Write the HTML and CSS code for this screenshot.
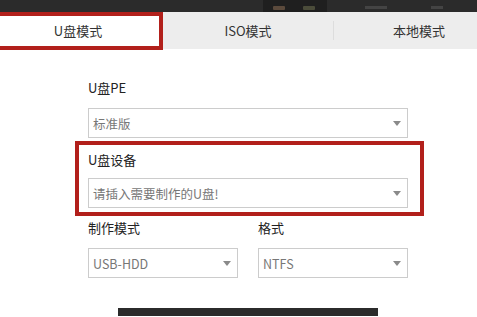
FILE: index.html
```html
<!DOCTYPE html>
<html lang="zh">
<head>
    <meta charset='utf-8'>
    <meta name="viewport" content="width=device-width, initial-scale=1">
    <title>U盘模式</title>
    <link rel="stylesheet" href="styles.css">
</head>
<body>

<div class="topbar">
    <div class="topbar-tools">
        <span class="tool tool-a"></span>
        <span class="tool tool-b"></span>
    </div>
    <span class="topbar-mark mark-a"></span>
    <span class="topbar-mark mark-b"></span>
</div>

<div class="tabs">
    <div class="tab active">U盘模式</div>
    <div class="tab">ISO模式</div>
    <div class="tab last">本地模式</div>
</div>

<div class="form">
    <div class="field">
        <div class="label">U盘PE</div>
        <div class="select"><span>标准版</span><i class="arrow"></i></div>
    </div>

    <div class="field highlight">
        <div class="label">U盘设备</div>
        <div class="select"><span>请插入需要制作的U盘!</span><i class="arrow"></i></div>
    </div>

    <div class="row">
        <div class="field">
            <div class="label">制作模式</div>
            <div class="select"><span>USB-HDD</span><i class="arrow"></i></div>
        </div>
        <div class="field">
            <div class="label">格式</div>
            <div class="select"><span>NTFS</span><i class="arrow"></i></div>
        </div>
    </div>

    <button class="start" aria-label="开始制作"></button>
</div>

</body>
</html>
```

FILE: styles.css
```css
body {
    margin: 0;
    background: #FFFFFF;
    font-family: "Noto Sans CJK SC", "Noto Sans", sans-serif;
    font-size: 13px;
    overflow: hidden;
}

.topbar {
    height: 12px;
    background: #2b2b2b;
    display: flex;
    align-items: flex-end;
}

.topbar-tools {
    margin-left: 263px;
    width: 64px;
    height: 12px;
    background: #1f1f1f;
    display: flex;
    align-items: flex-end;
    gap: 18px;
    padding-left: 10px;
    box-sizing: border-box;
}

.tool {
    width: 12px;
    height: 4px;
    margin-bottom: 2px;
    border-radius: 1px;
}

.tool-a {
    background: #5b4a3c;
}

.tool-b {
    background: #4b4c3a;
}

.topbar-mark {
    height: 3px;
    margin-bottom: 3px;
    background: #444444;
}

.mark-a {
    width: 22px;
    margin-left: 38px;
}

.mark-b {
    width: 12px;
    margin-left: 44px;
}

.tabs {
    display: flex;
    height: 37px;
    background: #ededed;
}

.tab {
    position: relative;
    width: 170px;
    flex: none;
    display: flex;
    align-items: center;
    justify-content: center;
    box-sizing: border-box;
    color: #333333;
}

.tab.active {
    width: 163px;
    padding-right: 7px;
    background: #FFFFFF;
}

.tab.last {
    width: 144px;
    padding-right: 0;
    justify-content: flex-start;
    padding-left: 60px;
}

.tab + .tab::before {
    content: "";
    position: absolute;
    left: 0;
    top: 9px;
    bottom: 9px;
    width: 1px;
    background: #dddddd;
}

.tab.active + .tab::before {
    display: none;
}

/* red annotation frame */
.tab.active::after {
    content: "";
    position: absolute;
    left: -4px;
    right: 0;
    top: 0;
    bottom: -1px;
    border: 4px solid #b2201b;
}

.form {
    width: 320px;
    margin-left: 88px;
    padding-top: 29px;
}

.label {
    height: 20px;
    line-height: 20px;
    margin-bottom: 10px;
    color: #222222;
}

.select {
    height: 30px;
    border: 1px solid #cccccc;
    box-sizing: border-box;
    display: flex;
    align-items: center;
    justify-content: space-between;
    padding: 0 6px 0 4px;
    color: #777777;
    font-size: 12.5px;
}

.arrow {
    width: 0;
    height: 0;
    border-left: 4px solid transparent;
    border-right: 4px solid transparent;
    border-top: 5px solid #8a8a8a;
}

.highlight {
    margin: 3px -16px 0 -13px;
    padding: 5px 12px 4px 9px;
    border: 4px solid #b2201b;
}

.highlight .label {
    margin-bottom: 8px;
}

.row {
    display: flex;
    gap: 20px;
    margin-top: 2px;
}

.row .field {
    flex: 1;
}

.start {
    display: block;
    width: 260px;
    height: 8px;
    margin: 30px auto 0;
    border: 0;
    padding: 0;
    background: #2b2b2b;
}
```
